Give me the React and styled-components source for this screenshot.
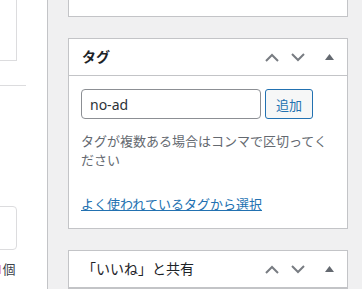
import styled, { createGlobalStyle } from "styled-components";

const GlobalStyle = createGlobalStyle`
body{
    margin:0;
    background:#f0f0f1;
    font-family:"Noto Sans","Noto Sans CJK JP",sans-serif;
    color:#3c434a;
}
`

const Page = styled.div`
display:flex;
align-items:flex-start;
height:289px;
overflow:hidden;
`

const LeftPanel = styled.div`
width:47px;
height:289px;
flex-shrink:0;
background:#fff;
border-right:1px solid #c3c4c7;
overflow:hidden;
display:flex;
flex-direction:column;
`

const FieldBox = styled.div`
width:100px;
margin-left:-83px;
height:${(p) => p.h}px;
margin-top:${(p) => p.top}px;
border:1px solid #dcdcde;
border-radius:${(p) => (p.round ? "4px" : "0")};
border-top:${(p) => (p.cut ? "none" : "1px solid #dcdcde")};
box-sizing:border-box;
flex-shrink:0;
`

const Rule = styled.div`
width:26px;
height:1px;
margin-top:${(p) => p.top}px;
background:#dcdcde;
flex-shrink:0;
`

const Counter = styled.p`
margin:10px 0 0 -5px;
font-size:13px;
line-height:19px;
white-space:nowrap;
color:#3c434a;
span{
    color:#d63638;
    font-weight:700;
}
`

const Sidebar = styled.div`
width:280px;
margin-left:20px;
flex-shrink:0;
display:flex;
flex-direction:column;
gap:21px;
`

const Postbox = styled.div`
background:#fff;
border:1px solid #c3c4c7;
box-sizing:border-box;
${(p) => p.cut && "border-top:none; height:17px;"}
`

const Header = styled.div`
display:flex;
align-items:center;
height:36px;
border-bottom:1px solid #c3c4c7;
padding-left:13px;
`

const Title = styled.h2`
margin:0;
flex:1;
font-size:14px;
font-weight:${(p) => (p.light ? 400 : 600)};
color:#1d2327;
line-height:1.4;
`

const Handle = styled.button`
width:${(p) => p.w}px;
height:36px;
padding:0;
border:none;
background:none;
display:flex;
align-items:center;
justify-content:center;
`

const Inside = styled.div`
padding:13px 12px 14px;
`

const TagRow = styled.div`
display:flex;
gap:4px;
`

const TagInput = styled.input`
width:180px;
height:30px;
box-sizing:border-box;
border:1px solid #8c8f94;
border-radius:4px;
padding:0 8px;
font-family:"Noto Sans","Noto Sans CJK JP",sans-serif;
font-size:14px;
color:#2c3338;
outline:none;
`

const AddButton = styled.button`
width:48px;
height:30px;
box-sizing:border-box;
border:1px solid #2271b1;
border-radius:3px;
background:#f6f7f7;
color:#2271b1;
font-family:"Noto Sans","Noto Sans CJK JP",sans-serif;
font-size:13px;
padding:0;
`

const HowTo = styled.p`
margin:13px 0 0;
font-size:13px;
line-height:19px;
color:#646970;
`

const CloudLink = styled.a`
display:block;
margin-top:25px;
font-size:13px;
line-height:19px;
color:#2271b1;
text-decoration:underline;
`

const Chevron = ({ up }) => (
    <svg width="14" height="9" viewBox="0 0 14 9">
        <polyline
            points={up ? "1,8 7,2 13,8" : "1,1 7,7 13,1"}
            fill="none"
            stroke="#787c82"
            strokeWidth="2"
        />
    </svg>
)

const Caret = () => (
    <svg width="9" height="6" viewBox="0 0 9 6">
        <polygon points="0,6 4.5,0 9,6" fill="#646970" />
    </svg>
)

const BoxHeader = ({ title, light }) => (
    <Header>
        <Title light={light}>{title}</Title>
        <Handle w={26}><Chevron up /></Handle>
        <Handle w={26}><Chevron /></Handle>
        <Handle w={36}><Caret /></Handle>
    </Header>
)

const App = () => {
    return (
        <>
            <GlobalStyle />
            <Page>
                <LeftPanel>
                    <FieldBox cut h={61} top={0} />
                    <Rule top={24} />
                    <FieldBox round h={44} top={120} />
                    <Counter><span>1</span>個</Counter>
                </LeftPanel>
                <Sidebar>
                    <Postbox cut />
                    <Postbox>
                        <BoxHeader title="タグ" />
                        <Inside>
                            <TagRow>
                                <TagInput defaultValue="no-ad" />
                                <AddButton>追加</AddButton>
                            </TagRow>
                            <HowTo>タグが複数ある場合はコンマで区切ってください</HowTo>
                            <CloudLink href="#">よく使われているタグから選択</CloudLink>
                        </Inside>
                    </Postbox>
                    <Postbox>
                        <BoxHeader title="「いいね」と共有" light />
                    </Postbox>
                </Sidebar>
            </Page>
        </>
    )
}

export default App
